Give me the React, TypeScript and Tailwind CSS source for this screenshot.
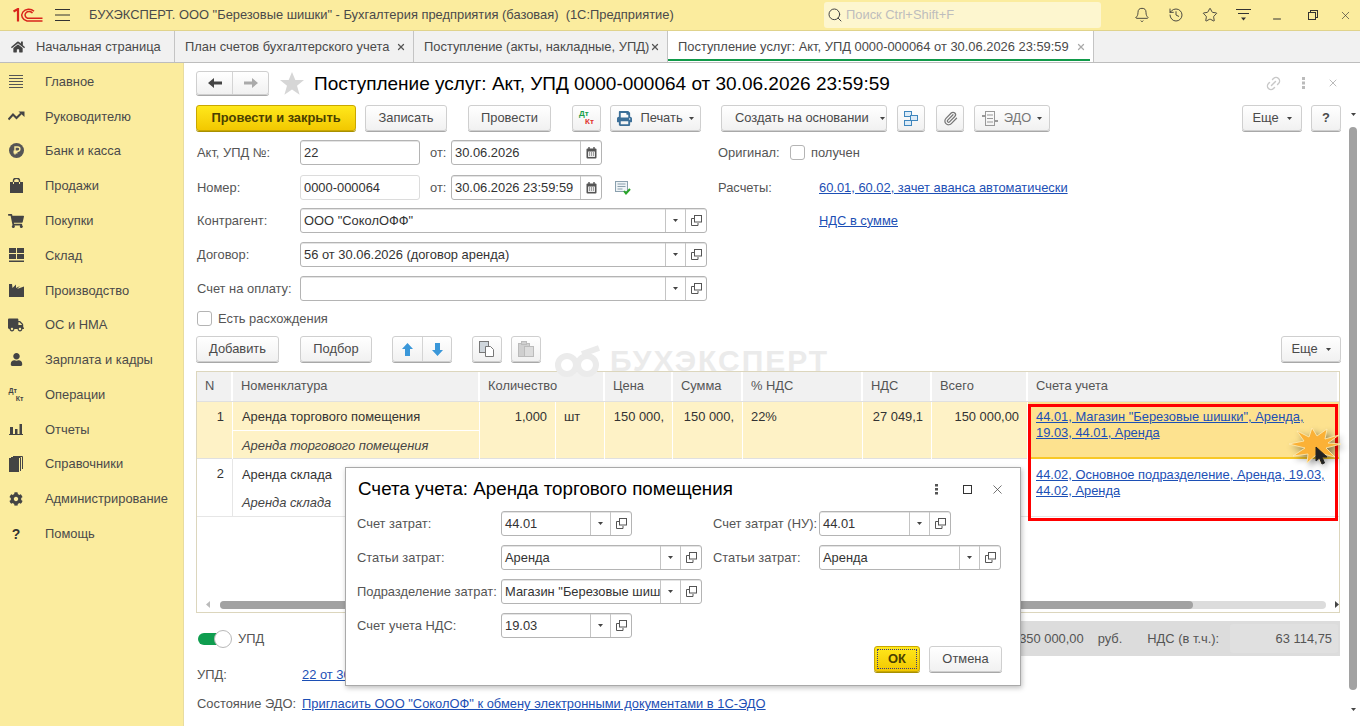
import type { ReactNode } from "react";
import { Bell, History, Link2, Minus, Paperclip, Search, Star, X } from "lucide-react";
import { FaCog, FaHome, FaPrint, FaShoppingCart, FaTruck, FaUser } from "react-icons/fa";

const linkCls = "text-[#1c4fb5] underline";

function Drop() {
  return (
    <svg width="5" height="3" viewBox="0 0 5 3" className="shrink-0">
      <path d="M0 0h5L2.5 3z" fill="#444" />
    </svg>
  );
}

function OpenIcon() {
  return (
    <svg width="11" height="11" viewBox="0 0 11 11" fill="none" stroke="#555" strokeWidth="1">
      <rect x="3.5" y="0.5" width="7" height="6.5" fill="#fff" />
      <path d="M3 3.5H0.5v7H7V8" />
    </svg>
  );
}

function CalendarIcon() {
  return (
    <svg width="11" height="12" viewBox="0 0 11 12">
      <rect x="0.5" y="1.5" width="10" height="10" rx="1" fill="#555" />
      <rect x="2" y="4.5" width="7" height="5.5" fill="#e8e8e8" />
      <path d="M3 0v3M8 0v3" stroke="#555" strokeWidth="1.4" />
      <path d="M3 6h1M5 6h1M7 6h1M3 8h1M5 8h1M7 8h1" stroke="#555" />
    </svg>
  );
}

function Field({
  w,
  value,
  drop,
  open,
  calendar,
  light,
}: {
  w: string;
  value?: string;
  drop?: boolean;
  open?: boolean;
  calendar?: boolean;
  light?: boolean;
}) {
  return (
    <div
      className={`flex h-[25px] shrink-0 overflow-hidden rounded-[3px] border bg-white ${w} ${
        light ? "border-[#dcdcdc]" : "border-[#b4b4b4] shadow-[inset_0_1px_0_#e4e4e4]"
      }`}
    >
      <div className="min-w-0 flex-1 overflow-hidden whitespace-nowrap pl-[3px] pr-px leading-[23px] text-[#333]">
        {value}
      </div>
      {drop && (
        <div className="flex w-[20px] shrink-0 items-center justify-center border-l border-[#c4c4c4]">
          <Drop />
        </div>
      )}
      {open && (
        <div className="flex w-[21px] shrink-0 items-center justify-center border-l border-[#c4c4c4]">
          <OpenIcon />
        </div>
      )}
      {calendar && (
        <div className="flex w-[21px] shrink-0 items-center justify-center border-l border-[#c4c4c4]">
          <CalendarIcon />
        </div>
      )}
    </div>
  );
}

function Btn({ w, children, className = "" }: { w: string; children: ReactNode; className?: string }) {
  return (
    <div
      className={`flex h-[26px] shrink-0 items-center justify-center gap-[6px] rounded-[3px] border border-[#cfcfcf] bg-gradient-to-b from-white to-[#f1f1f1] text-[#4a4a4a] shadow-[0_1px_0_#a8a8a8] ${w} ${className}`}
    >
      {children}
    </div>
  );
}

function Check() {
  return <div className="h-[15px] w-[15px] shrink-0 rounded-[3px] border border-[#b4b4b4] bg-white" />;
}

function Label({ w, children }: { w: string; children: ReactNode }) {
  return <div className={`shrink-0 whitespace-nowrap text-[#555] ${w}`}>{children}</div>;
}

const sideItems: { label: string; icon: ReactNode }[] = [
  {
    label: "Главное",
    icon: (
      <svg width="16" height="14" viewBox="0 0 16 14" stroke="#555" strokeWidth="1">
        <path d="M1 1.5h14M1 4.5h14M1 7.5h14M1 10.5h14M1 13.5h14" />
      </svg>
    ),
  },
  {
    label: "Руководителю",
    icon: (
      <svg width="17" height="10" viewBox="0 0 17 10" fill="none">
        <path d="M0.5 8.5 5 3.5l3.5 3.5L13 2.5" stroke="#444" strokeWidth="2" />
        <path d="M10.5 0.5H16.5V6z" fill="#444" />
      </svg>
    ),
  },
  {
    label: "Банк и касса",
    icon: (
      <svg width="15" height="15" viewBox="0 0 15 15">
        <circle cx="7.5" cy="7.5" r="7.5" fill="#555" />
        <path d="M6 11.5V4h2.8a2 2 0 0 1 0 4.2H4.5M4.5 9.8H8.5" fill="none" stroke="#fbec9e" strokeWidth="1.4" />
      </svg>
    ),
  },
  {
    label: "Продажи",
    icon: (
      <svg width="13" height="15" viewBox="0 0 13 15">
        <rect y="4" width="13" height="11" fill="#444" />
        <path d="M3.5 6V2.5a3 2.3 0 0 1 6 0V6" fill="none" stroke="#444" strokeWidth="1.4" />
        <path d="M3.5 4v2M9.5 4v2" stroke="#fbec9e" strokeWidth="1" />
      </svg>
    ),
  },
  { label: "Покупки", icon: <FaShoppingCart size={16} color="#444" /> },
  {
    label: "Склад",
    icon: (
      <svg width="15" height="14" viewBox="0 0 15 14" fill="#444">
        <path d="M0 0h7v5H0zM8 0h7v5H8zM0 6h7v5H0zM8 6h7v5H8zM0 12.5h15V14H0z" />
      </svg>
    ),
  },
  {
    label: "Производство",
    icon: (
      <svg width="15" height="14" viewBox="0 0 15 14" fill="#444">
        <path d="M0 14V1h3l.5 4L7 1.5V5l4-2-3 3 7-2.500V14z" />
      </svg>
    ),
  },
  { label: "ОС и НМА", icon: <FaTruck size={16} color="#444" /> },
  { label: "Зарплата и кадры", icon: <FaUser size={13} color="#444" /> },
  {
    label: "Операции",
    icon: (
      <div className="relative h-[15px] w-[15px] font-bold leading-none text-[#444]">
        <span className="absolute left-0 top-0 text-[7px]">Дт</span>
        <span className="absolute bottom-0 right-0 text-[7px]">Кт</span>
      </div>
    ),
  },
  {
    label: "Отчеты",
    icon: (
      <svg width="14" height="12" viewBox="0 0 14 12" fill="#444">
        <path d="M1 4h3v7H1zM6 6h2.500v5H6zM10.500 1H13v10h-2.500zM0 11h14v1H0z" />
      </svg>
    ),
  },
  {
    label: "Справочники",
    icon: (
      <svg width="14" height="16" viewBox="0 0 14 16">
        <rect x="0" y="2" width="10" height="14" fill="#444" />
        <path d="M2 1.5h9.500V15M4 0.5h9.500V13" fill="none" stroke="#444" strokeWidth="1" />
      </svg>
    ),
  },
  { label: "Администрирование", icon: <FaCog size={14} color="#444" /> },
  { label: "Помощь", icon: <span className="text-[14px] font-bold leading-none text-[#333]">?</span> },
];

function Sidebar() {
  return (
    <aside className="w-[184px] shrink-0 border-r border-[#e8dca0] bg-[#fbec9e] pt-[1px]">
      {sideItems.map((item) => (
        <div key={item.label} className="flex h-[34.8px] items-center text-[#4a4a4a]">
          <div className="flex w-[45px] justify-center pr-[13px]">{item.icon}</div>
          <span className="whitespace-nowrap">{item.label}</span>
        </div>
      ))}
    </aside>
  );
}

function TopBar() {
  return (
    <header className="flex h-[31px] shrink-0 items-center border-b border-[#e0d38c] bg-[#fbec9e] text-[#4a4a4a]">
      <svg width="30" height="14" viewBox="0 0 30 14" fill="none" stroke="#d9251c" className="ml-[13px]">
        <path d="M0.500 3.500 5 1v12.500" strokeWidth="2.200" />
        <path d="M21 3.200A7 6 0 1 0 14 13h15.500" strokeWidth="1.500" />
        <path d="M19.500 5.200A4 3.500 0 1 0 14.500 10.200h15" strokeWidth="1.500" />
      </svg>
      <svg width="15" height="12" viewBox="0 0 15 12" stroke="#333" strokeWidth="1" className="ml-[12px]">
        <path d="M0 .5h15M0 6h15M0 11.5h15" />
      </svg>
      <span className="ml-[19px] w-[735px] shrink-0 whitespace-pre">
        БУХЭКСПЕРТ. ООО "Березовые шишки" - Бухгалтерия предприятия (базовая)  (1С:Предприятие)
      </span>
      <div className="flex h-[26px] w-[277px] shrink-0 items-center rounded-[3px] bg-[#fdf6cf] pl-[3px] text-[#bdbdbd]">
        <Search size={16} color="#444" strokeWidth={1.5} />
        <span className="ml-[3px]">Поиск Ctrl+Shift+F</span>
      </div>
      <div className="ml-[33px] flex items-center gap-[18px]">
        <Bell size={16} color="#333" strokeWidth={1.3} />
        <History size={16} color="#333" strokeWidth={1.3} />
        <Star size={16} color="#333" strokeWidth={1.3} />
        <svg width="15" height="12" viewBox="0 0 15 12" stroke="#333">
          <path d="M0 .5h15M2 4.5h11" />
          <path d="M5 8.5h5L7.5 11.5z" fill="#333" stroke="none" />
        </svg>
      </div>
      <Minus size={12} color="#333" className="ml-[20px] mt-[7px]" />
      <svg width="10" height="10" viewBox="0 0 10 10" fill="none" stroke="#333" className="ml-[25px]">
        <rect x="2.5" y="0.5" width="7" height="7" />
        <rect x="0.5" y="2.5" width="7" height="7" fill="#fbec9e" />
      </svg>
      <X size={13} color="#333" strokeWidth={1.2} className="ml-[21px]" />
    </header>
  );
}

function Tab({ w, label, active }: { w: string; label: string; active?: boolean }) {
  return (
    <div
      className={`relative flex h-full shrink-0 items-center justify-between border-r border-[#c4c4c4] pl-[10px] pr-[7px] ${w} ${
        active ? "bg-white" : ""
      }`}
    >
      <span className="whitespace-nowrap text-[#4a4a4a]">{label}</span>
      <X size={10} strokeWidth={3} color={active ? "#aaa" : "#555"} />
      {active && <div className="absolute bottom-[1px] left-0 right-[3px] h-[2px] bg-[#109a4a]" />}
    </div>
  );
}

function Tabs() {
  return (
    <nav className="flex h-[32px] shrink-0 border-b border-[#bdbdbd] bg-[#f1f1f1]">
      <div className="flex h-full w-[175px] shrink-0 items-center border-r border-[#c4c4c4] pl-[11px] text-[#4a4a4a]">
        <FaHome size={14} color="#444" />
        <span className="ml-[11px] whitespace-nowrap">Начальная страница</span>
      </div>
      <Tab w="w-[239px]" label="План счетов бухгалтерского учета" />
      <Tab w="w-[254px]" label="Поступление (акты, накладные, УПД)" />
      <Tab w="w-[426px]" label="Поступление услуг: Акт, УПД 0000-000064 от 30.06.2026 23:59:59" active />
    </nav>
  );
}

function FormHeader() {
  return (
    <div className="flex h-[24px] items-center">
      <div className="flex h-[24px] w-[73px] rounded-[3px] border border-[#cfcfcf] bg-gradient-to-b from-white to-[#f1f1f1] shadow-[0_1px_0_#a8a8a8]">
        <div className="flex w-[36px] items-center justify-center border-r border-[#d4d4d4]">
          <svg width="14" height="10" viewBox="0 0 14 10" fill="#444">
            <path d="M0 5 6 0v3.5h8v3H6V10z" />
          </svg>
        </div>
        <div className="flex flex-1 items-center justify-center">
          <svg width="14" height="10" viewBox="0 0 14 10" fill="#aaa">
            <path d="M14 5 8 0v3.5H0v3h8V10z" />
          </svg>
        </div>
      </div>
      <svg width="24" height="23" viewBox="0 0 24 23" className="ml-[11px]" fill="#d6d6d6">
        <path d="m12 0 3.3 8H24l-7 5.700 2.600 9L12 17.500 4.400 22.700l2.600-9L0 8h8.700z" />
      </svg>
      <h1 className="ml-[10px] whitespace-nowrap text-[19px] leading-none text-black">
        Поступление услуг: Акт, УПД 0000-000064 от 30.06.2026 23:59:59
      </h1>
      <div className="ml-auto flex items-center pr-[2px]">
        <Link2 size={17} color="#c8c8c8" className="-rotate-45" />
        <svg width="3" height="12" viewBox="0 0 3 12" fill="#bbb" className="ml-[20px]">
          <path d="M0 0h3v3H0zM0 4.500h3v3H0zM0 9h3v3H0z" />
        </svg>
        <X size={12} color="#bbb" className="ml-[22px]" />
      </div>
    </div>
  );
}

function FormToolbar() {
  return (
    <div className="mt-[10px] flex h-[26px] items-center">
      <div className="flex h-[26px] w-[160px] shrink-0 items-center justify-center rounded-[3px] border border-[#c9a700] bg-gradient-to-b from-[#ffe81a] to-[#f2c800] font-bold text-[#4a4000] shadow-[0_1px_0_#a89000]">
        Провести и закрыть
      </div>
      <Btn w="w-[82px]" className="ml-[9px]">Записать</Btn>
      <Btn w="w-[83px]" className="ml-[21px]">Провести</Btn>
      <Btn w="w-[29px]" className="relative ml-[21px]">
        <span className="absolute left-[6px] top-[4px] text-[8px] font-bold leading-none text-[#1a9e4b]">Дт</span>
        <span className="absolute left-[12px] top-[12px] text-[8px] font-bold leading-none text-[#e0322b]">Кт</span>
      </Btn>
      <Btn w="w-[91px]" className="ml-[9px]">
        <FaPrint size={15} color="#3c6f98" />
        <span className="ml-[2px]">Печать</span>
        <Drop />
      </Btn>
      <Btn w="w-[166px]" className="ml-[20px] !justify-start !gap-[11px] pl-[13px]">
        Создать на основании
        <Drop />
      </Btn>
      <Btn w="w-[28px]" className="ml-[10px]">
        <svg width="14" height="15" viewBox="0 0 14 15" fill="#dcebf7" stroke="#3f86bd">
          <rect x="0.5" y="0.5" width="7" height="5" />
          <rect x="6.500" y="4.500" width="7" height="5" />
          <rect x="0.5" y="9.500" width="7" height="5" />
        </svg>
      </Btn>
      <Btn w="w-[28px]" className="ml-[11px]">
        <Paperclip size={15} color="#777" />
      </Btn>
      <Btn w="w-[76px]" className="ml-[10px] text-[#777]">
        <svg width="16" height="15" viewBox="0 0 16 15" fill="none" stroke="#999">
          <rect x="3.500" y="0.5" width="9" height="14" />
          <path d="M5 4h6M5 7.500h6M5 11h6" />
          <path d="M0 5h3M13 10h3" strokeWidth="2" />
        </svg>
        <span>ЭДО</span>
        <Drop />
      </Btn>
      <Btn w="w-[60px]" className="ml-auto !gap-[8px]">
        Еще
        <Drop />
      </Btn>
      <Btn w="w-[30px]" className="ml-[9px] font-bold">?</Btn>
    </div>
  );
}

function Requisites() {
  return (
    <>
      <div className="mt-[9px] flex h-[25px] items-center pl-px">
        <Label w="w-[103px]">Акт, УПД №:</Label>
        <Field w="w-[120px]" value="22" />
        <span className="ml-[10px] w-[21px] shrink-0 text-[#555]">от:</span>
        <Field w="w-[151px]" value="30.06.2026" calendar />
        <Label w="ml-[116px] w-[72px]">Оригинал:</Label>
        <Check />
        <span className="ml-[6px] text-[#555]">получен</span>
      </div>
      <div className="mt-[10px] flex h-[25px] items-center pl-px">
        <Label w="w-[103px]">Номер:</Label>
        <Field w="w-[120px]" value="0000-000064" light />
        <span className="ml-[10px] w-[21px] shrink-0 text-[#555]">от:</span>
        <Field w="w-[151px]" value="30.06.2026 23:59:59" calendar />
        <svg width="16" height="14" viewBox="0 0 16 14" className="ml-[13px]" fill="none">
          <rect x="0.5" y="0.5" width="12" height="10" fill="#eef3f6" stroke="#8aa0ae" />
          <path d="M2.500 3h8M2.500 5.500h8M2.500 8h5" stroke="#8aa0ae" />
          <path d="m9 10 2 2.500 4-4.500" stroke="#2aa62a" strokeWidth="2" />
        </svg>
        <Label w="ml-[87px] w-[101px]">Расчеты:</Label>
        <span className={`whitespace-nowrap ${linkCls}`}>60.01, 60.02, зачет аванса автоматически</span>
      </div>
      <div className="mt-[8px] flex h-[25px] items-center pl-px">
        <Label w="w-[103px]">Контрагент:</Label>
        <Field w="w-[407px]" value='ООО "СоколОФФ"' drop open />
        <span className={`ml-[112px] whitespace-nowrap ${linkCls}`}>НДС в сумме</span>
      </div>
      <div className="mt-[9px] flex h-[25px] items-center pl-px">
        <Label w="w-[103px]">Договор:</Label>
        <Field w="w-[407px]" value="56 от 30.06.2026 (договор аренда)" drop open />
      </div>
      <div className="mt-[9px] flex h-[25px] items-center pl-px">
        <Label w="w-[103px]">Счет на оплату:</Label>
        <Field w="w-[407px]" drop open />
      </div>
      <div className="mt-[10px] flex h-[15px] items-center pl-px">
        <Check />
        <span className="ml-[6px] text-[#555]">Есть расхождения</span>
      </div>
    </>
  );
}

function TableToolbar() {
  return (
    <div className="mt-[10px] flex h-[26px] items-center">
      <Btn w="w-[83px]">Добавить</Btn>
      <Btn w="w-[72px]" className="ml-[21px]">Подбор</Btn>
      <div className="ml-[20px] flex h-[26px] w-[60px] rounded-[3px] border border-[#cfcfcf] bg-gradient-to-b from-white to-[#f1f1f1] shadow-[0_1px_0_#a8a8a8]">
        <div className="flex w-[30px] items-center justify-center border-r border-[#d4d4d4]">
          <svg width="11" height="13" viewBox="0 0 11 13" fill="#3a97d9">
            <path d="M5.500 0 11 6H8v7H3V6H0z" />
          </svg>
        </div>
        <div className="flex flex-1 items-center justify-center">
          <svg width="11" height="13" viewBox="0 0 11 13" fill="#3a97d9">
            <path d="M5.500 13 11 7H8V0H3v7H0z" />
          </svg>
        </div>
      </div>
      <Btn w="w-[30px]" className="ml-[20px]">
        <svg width="16" height="16" viewBox="0 0 16 16" fill="#fff" stroke="#777">
          <rect x="0.5" y="0.5" width="9" height="11" fill="#cfd6dc" />
          <path d="M6.500 5.500h5l3 3v7h-8z" />
        </svg>
      </Btn>
      <Btn w="w-[30px]" className="ml-[9px]">
        <svg width="16" height="16" viewBox="0 0 16 16" fill="#cfcfcf" stroke="#bbb">
          <rect x="0.5" y="2.500" width="11" height="13" />
          <rect x="3.500" y="0.5" width="5" height="3" />
          <rect x="6.500" y="5.500" width="9" height="10" fill="#dcdcdc" />
        </svg>
      </Btn>
      <Btn w="w-[60px]" className="ml-auto !gap-[8px]">
        Еще
        <Drop />
      </Btn>
    </div>
  );
}

const tableCols = "grid-cols-[36px_247px_76px_49px_68px_70px_120px_69px_96px_311px]";

function Th({ children, span = "" }: { children: string; span?: string }) {
  return <div className={`border-r-2 border-white pl-[8px] leading-[28px] text-[#555] ${span}`}>{children}</div>;
}

function Cell({ children, right, border = "border-white" }: { children?: string; right?: boolean; border?: string }) {
  return (
    <div
      className={`row-span-2 overflow-hidden whitespace-nowrap border-r ${border} pt-[5px] text-[#333] ${
        right ? "pr-[8px] text-right" : "pl-[8px]"
      }`}
    >
      {children}
    </div>
  );
}

function DataTable() {
  return (
    <div className="relative mt-[9px] flex h-[242px] w-[1144px] flex-col border border-[#dcd6bd]">
      <div className={`grid h-[30px] shrink-0 ${tableCols} border-b border-[#e0e0e0] bg-[#f1f1f1]`}>
        <Th>N</Th>
        <Th>Номенклатура</Th>
        <Th span="col-span-2">Количество</Th>
        <Th>Цена</Th>
        <Th>Сумма</Th>
        <Th>% НДС</Th>
        <Th>НДС</Th>
        <Th>Всего</Th>
        <Th>Счета учета</Th>
      </div>

      <div className={`grid h-[57px] shrink-0 ${tableCols} grid-rows-[29px_28px] border-b border-[#e0e0e0] bg-[#fef2c6]`}>
        <Cell right>1</Cell>
        <div className="border-b border-r border-white pl-[9px] pt-[5px] text-[#333]">Аренда торгового помещения</div>
        <Cell right>1,000</Cell>
        <Cell>шт</Cell>
        <Cell right>150 000,</Cell>
        <Cell right>150 000,</Cell>
        <Cell>22%</Cell>
        <Cell right>27 049,1</Cell>
        <Cell right>150 000,00</Cell>
        <div className="col-start-10 row-span-2 row-start-1 border-b-2 border-[#f8c826] bg-[#fde28f] pl-[8px] pr-[4px] pt-[7px] leading-[16px]">
          <span className={linkCls}>44.01, Магазин "Березовые шишки", Аренда, 19.03, 44.01, Аренда</span>
        </div>
        <div className="col-start-2 row-start-2 border-r border-white pl-[9px] pt-[5px] italic text-[#444]">
          Аренда торгового помещения
        </div>
      </div>

      <div className={`grid h-[58px] shrink-0 ${tableCols} grid-rows-[29px_29px] border-b border-[#e6e6e6]`}>
        <Cell right border="border-[#e6e6e6]">2</Cell>
        <div className="pl-[9px] pt-[6px] text-[#333]">Аренда склада</div>
        <div className="col-start-3 col-span-7 row-span-2 row-start-1" />
        <div className="col-start-10 row-span-2 row-start-1 pl-[8px] pr-[4px] pt-[8px] leading-[16px]">
          <span className={linkCls}>44.02, Основное подразделение, Аренда, 19.03, 44.02, Аренда</span>
        </div>
        <div className="col-start-2 row-start-2 pl-[9px] pt-[5px] italic text-[#444]">Аренда склада</div>
      </div>

      <div className="mt-auto flex h-[13px] shrink-0 items-center pb-[2px]">
        <svg width="4" height="7" viewBox="0 0 4 7" className="ml-[9px]">
          <path d="M4 0v7L0 3.500z" fill="#bbb" />
        </svg>
        <div className="ml-[10px] h-[8px] w-[1110px] rounded-full bg-[#dcdcdc]">
          <div className="h-full w-[973px] rounded-full bg-[#a2a2a2]" />
        </div>
        <svg width="4" height="7" viewBox="0 0 4 7" className="ml-[9px]">
          <path d="M0 0v7l4-3.500z" fill="#444" />
        </svg>
      </div>

      <div className="absolute left-[831px] top-[32px] h-[117px] w-[310px] border-[3px] border-[#f00]" />
      <svg width="52" height="36" viewBox="0 0 52 36" className="absolute left-[1092px] top-[56px] overflow-visible">
        <path
          d="M52 16 37 20l9 9-12-3-1 10-6-9-9 8 1-9-15 2 12-8L0 16l15-3-7-10 12 6 3-9 5 8 10-7-2 10 14-4-11 8z"
          fill="#fbb136"
          stroke="#ffedb8"
          strokeWidth="0.8"
          className="drop-shadow-[3px_3px_3px_rgba(0,0,0,0.45)]"
        />
        <path d="M27 19v14l3.500-3 2.500 6 2.500-1-2.500-6h5z" fill="#222" stroke="#222" />
      </svg>
    </div>
  );
}

function Footer() {
  return (
    <>
      <div className="mt-[8px] flex h-[35px] w-[1144px] items-center pl-[2px]">
        <div className="relative h-[12px] w-[32px] shrink-0 rounded-full bg-[#0f9d4f]">
          <div className="absolute -top-[3px] right-[-2px] h-[18px] w-[18px] rounded-full border border-[#b8b8b8] bg-white" />
        </div>
        <span className="ml-[8px] text-[#555]">УПД</span>
        <div className="ml-[260px] flex h-full flex-1 items-center bg-[#dcdcdc] text-[#555]">
          <span className="ml-[495px] whitespace-nowrap">350 000,00</span>
          <span className="ml-[14px]">руб.</span>
          <span className="ml-[25px] whitespace-nowrap">НДС (в т.ч.):</span>
          <div className="ml-auto mr-[2px] h-[29px] w-[108px] rounded-[3px] bg-[#e0e0e0] pr-[6px] text-right leading-[29px]">
            63 114,75
          </div>
        </div>
      </div>
      <div className="mt-[10px] flex h-[18px] items-center pl-px">
        <Label w="w-[105px]">УПД:</Label>
        <span className={`whitespace-nowrap ${linkCls}`}>22 от 30.06.2026</span>
      </div>
      <div className="mt-[11px] flex h-[18px] items-center pl-px">
        <Label w="w-[105px]">Состояние ЭДО:</Label>
        <span className={`whitespace-nowrap ${linkCls}`}>
          Пригласить ООО "СоколОФ" к обмену электронными документами в 1С-ЭДО
        </span>
      </div>
    </>
  );
}

function DialogRow({ children, mt }: { children: ReactNode; mt: string }) {
  return <div className={`flex h-[25px] items-center pl-[11px] ${mt}`}>{children}</div>;
}

function AccountsDialog() {
  return (
    <div className="absolute left-[161px] top-[404px] flex h-[219px] w-[676px] flex-col border border-[#a9a9a9] bg-white shadow-[1px_2px_5px_rgba(0,0,0,0.25)]">
      <div className="flex h-[43px] shrink-0 items-center pl-[12px]">
        <span className="whitespace-nowrap text-[18.800px] leading-none text-black">
          Счета учета: Аренда торгового помещения
        </span>
        <div className="ml-auto flex items-center pr-[15px]">
          <svg width="3" height="11" viewBox="0 0 3 11" fill="#555">
            <path d="M0 0h3v2.500H0zM0 4h3v2.500H0zM0 8h3v2.500H0z" />
          </svg>
          <div className="ml-[25px] h-[9px] w-[9px] border border-[#333]" />
          <X size={15} color="#444" strokeWidth={1.2} className="ml-[18px]" />
        </div>
      </div>
      <DialogRow mt="">
        <Label w="w-[144px]">Счет затрат:</Label>
        <Field w="w-[131px]" value="44.01" drop open />
        <Label w="ml-[81px] w-[106px]">Счет затрат (НУ):</Label>
        <Field w="w-[132px]" value="44.01" drop open />
      </DialogRow>
      <DialogRow mt="mt-[9px]">
        <Label w="w-[144px]">Статьи затрат:</Label>
        <Field w="w-[201px]" value="Аренда" drop open />
        <Label w="ml-[11px] w-[106px]">Статьи затрат:</Label>
        <Field w="w-[182px]" value="Аренда" drop open />
      </DialogRow>
      <DialogRow mt="mt-[9px]">
        <Label w="w-[144px]">Подразделение затрат:</Label>
        <Field w="w-[201px]" value='Магазин "Березовые шишки"' drop open />
      </DialogRow>
      <DialogRow mt="mt-[9px]">
        <Label w="w-[144px]">Счет учета НДС:</Label>
        <Field w="w-[131px]" value="19.03" drop open />
      </DialogRow>
      <div className="mt-[8px] flex justify-end pr-[18px]">
        <div className="flex h-[26px] w-[46px] items-center justify-center rounded-[3px] border border-[#c9a700] bg-gradient-to-b from-[#ffe81a] to-[#f2c800] p-[2px] shadow-[0_1px_0_#a89000]">
          <div className="flex h-full w-full items-center justify-center border border-dotted border-[#3a3a80] font-bold text-[#4a4000]">
            ОК
          </div>
        </div>
        <Btn w="w-[73px]" className="ml-[9px]">Отмена</Btn>
      </div>
    </div>
  );
}

function Watermark() {
  return (
    <div className="pointer-events-none absolute left-[371px] top-[280px] flex h-[36px] items-center text-[#ebebeb]">
      <svg width="46" height="36" viewBox="0 0 46 36" fill="none" stroke="#ebebeb" strokeWidth="6">
        <circle cx="12" cy="22" r="9" />
        <circle cx="32" cy="22" r="9" />
        <path d="M27 11 44 5" />
      </svg>
      <span className="ml-[9px] whitespace-nowrap text-[30px] font-bold leading-none tracking-[2px]">БУХЭКСПЕРТ</span>
    </div>
  );
}

export default function App() {
  return (
    <div className="flex h-[726px] w-[1360px] flex-col overflow-hidden bg-white font-['Liberation_Sans',Arial,sans-serif] text-[12.9px]">
      <TopBar />
      <Tabs />
      <div className="flex min-h-0 flex-1">
        <Sidebar />
        <main className="relative flex min-w-0 flex-1">
          <div className="w-[1157px] shrink-0 pl-[12px] pt-[8px]">
            <FormHeader />
            <FormToolbar />
            <Requisites />
            <TableToolbar />
            <DataTable />
            <Footer />
          </div>
          <div className="ml-[8px] flex w-[8px] shrink-0 flex-col items-center pt-[50px]">
            <Drop />
            <div className="mt-[11px] h-[563px] w-[8px] rounded-full bg-[#a2a2a2]" />
            <div className="mt-[18px]">
              <Drop />
            </div>
          </div>
          <Watermark />
          <AccountsDialog />
        </main>
      </div>
    </div>
  );
}
